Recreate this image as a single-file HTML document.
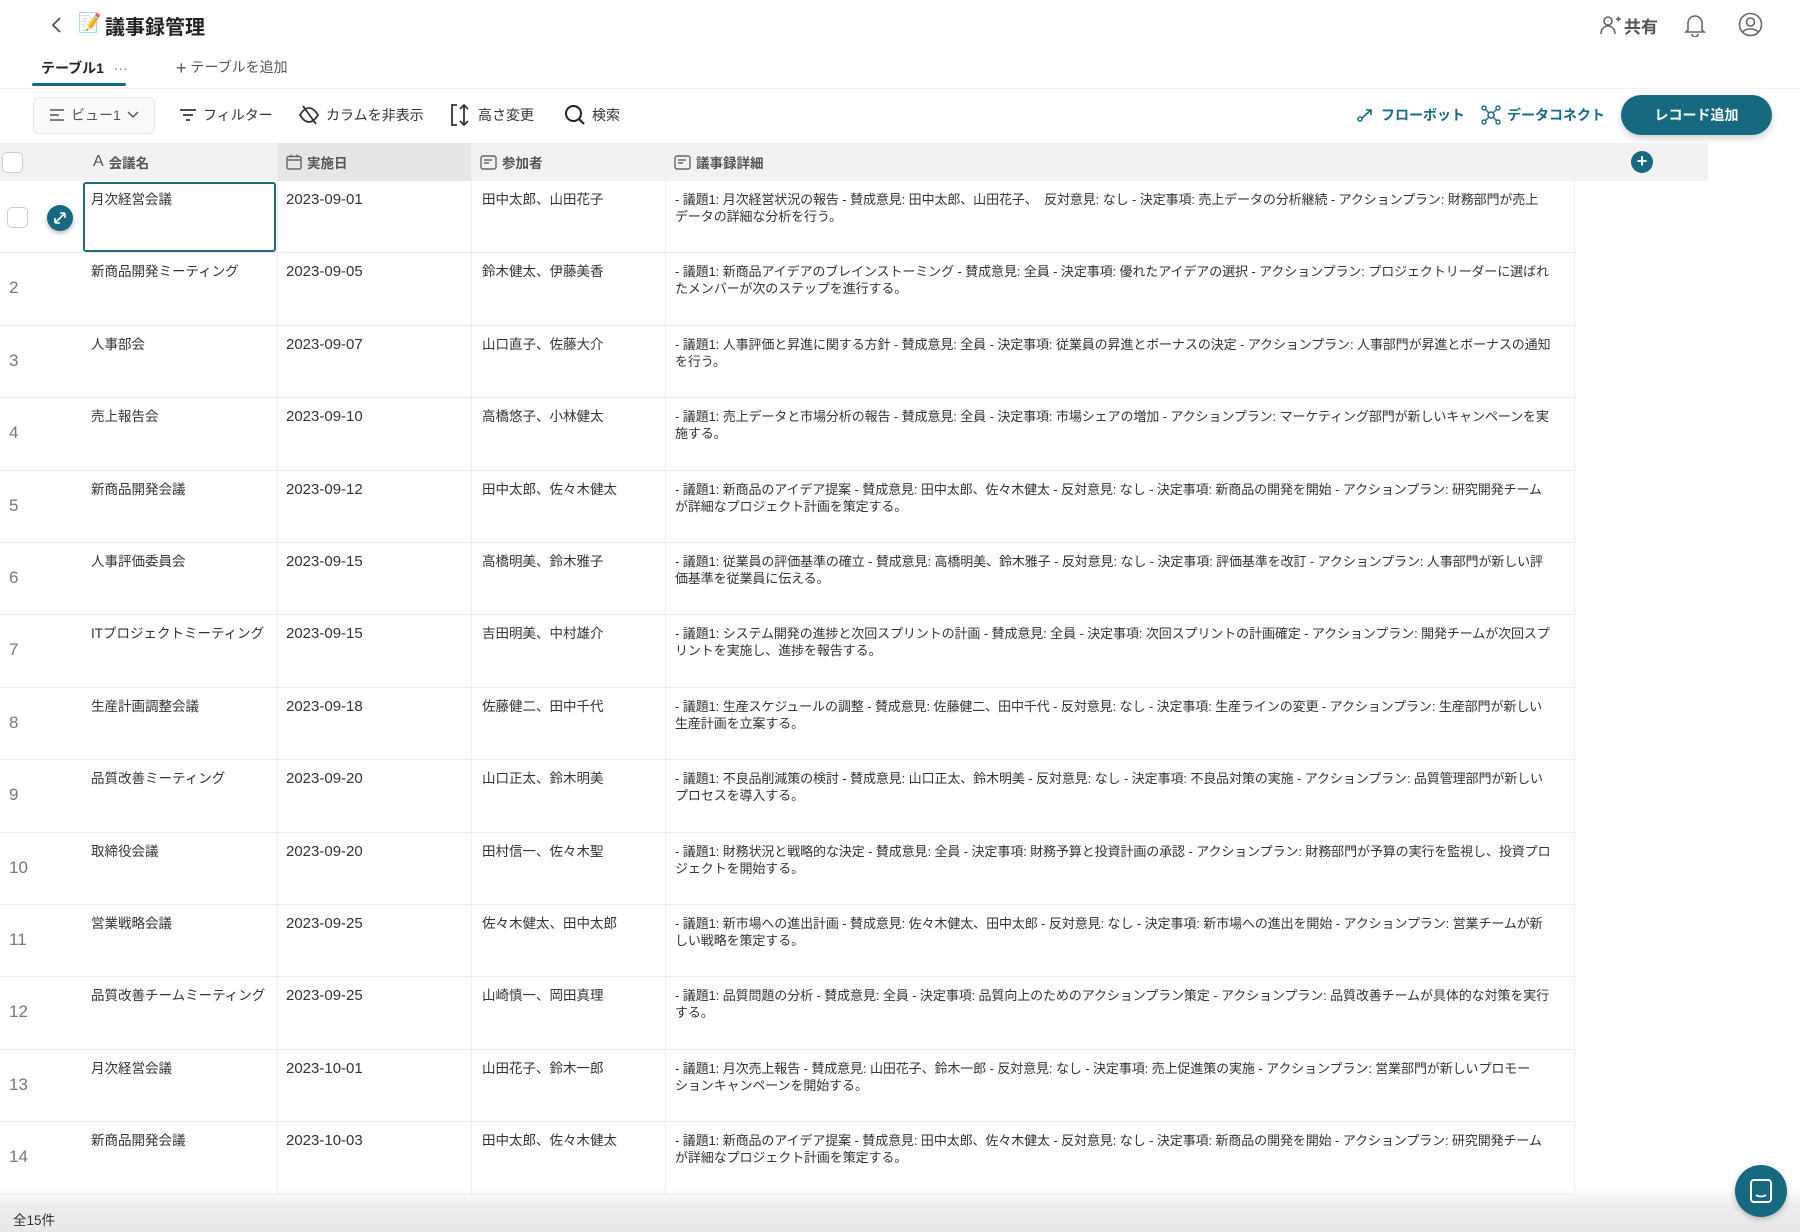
<!DOCTYPE html>
<html><head><meta charset="utf-8"><style>
*{box-sizing:border-box;margin:0;padding:0}
body{width:1800px;height:1232px;overflow:hidden;background:#fff;font-family:"Liberation Sans","Noto Sans CJK JP",sans-serif;color:#222;position:relative}
.abs{position:absolute}
.tb{position:absolute;top:104px;font-size:14px;color:#333;display:flex;align-items:center;gap:6px;height:22px}
.hdr{position:absolute;top:143px;height:38px;background:#f2f2f2;left:0;width:1708px}
.hc{position:absolute;top:0;height:38px;display:flex;align-items:center;font-size:13.5px;font-weight:bold;color:#555;gap:5px}
.row{position:absolute;left:0;width:1574px;height:72.4px;border-bottom:1px solid #ececec}
.row div{position:absolute;top:10px;font-size:13.5px;color:#333;line-height:17px;white-space:nowrap}
.row div.d{font-size:13px;letter-spacing:-0.1px}
.vl{position:absolute;top:143px;bottom:38px;width:1px;background:#efefef}
.num{left:9px!important;top:26px!important;font-size:17px!important;color:#777!important}
</style></head><body>
<svg class="abs" style="left:50px;top:15px" width="14" height="20" viewBox="0 0 14 20"><path d="M10 3 L3 10 L10 17" fill="none" stroke="#555" stroke-width="1.8"/></svg>
<div class="abs" style="left:78px;top:13px;width:22px;height:22px;font-size:19px;line-height:22px">📝</div>
<div class="abs" style="left:105px;top:11px;font-size:20px;font-weight:bold;color:#222">議事録管理</div>
<svg class="abs" style="left:1600px;top:14px" width="22" height="22" viewBox="0 0 22 22"><circle cx="8" cy="7" r="4" fill="none" stroke="#666" stroke-width="1.6"/><path d="M1 20c0-5 3-8 7-8s7 3 7 8" fill="none" stroke="#666" stroke-width="1.6"/><path d="M16 5h5M18.5 2.5v5" stroke="#666" stroke-width="1.6"/></svg>
<div class="abs" style="left:1624px;top:13px;font-size:17px;font-weight:bold;color:#555">共有</div>
<svg class="abs" style="left:1684px;top:13px" width="22" height="24" viewBox="0 0 22 24"><path d="M4 17V10a7 7 0 0 1 14 0v7l2 2H2z" fill="none" stroke="#666" stroke-width="1.6"/><path d="M8 21a3 3 0 0 0 6 0" fill="none" stroke="#666" stroke-width="1.6"/></svg>
<svg class="abs" style="left:1738px;top:12px" width="25" height="25" viewBox="0 0 25 25"><circle cx="12.5" cy="12.5" r="11" fill="none" stroke="#666" stroke-width="1.6"/><circle cx="12.5" cy="10" r="4" fill="none" stroke="#666" stroke-width="1.6"/><path d="M5 20c2-4 13-4 15 0" fill="none" stroke="#666" stroke-width="1.6"/></svg>
<div class="abs" style="left:41px;top:58px;font-size:14px;font-weight:bold;color:#222">テーブル1 <span style="font-weight:normal;color:#777;margin-left:6px">···</span></div>
<div class="abs" style="left:32px;top:83px;width:94px;height:3px;background:#1a6a80;border-radius:2px"></div>
<div class="abs" style="left:176px;top:57px;font-size:14px;color:#555"><span style="font-size:18px;vertical-align:-2px">+</span> テーブルを追加</div>
<div class="abs" style="left:0;top:88px;width:1800px;height:1px;background:#f2f2f2"></div>
<div class="abs" style="left:33px;top:97px;width:122px;height:37px;border:1px solid #e8e8e8;border-radius:6px;background:#fafafa"></div>
<div class="tb" style="left:49px;color:#555"><svg width="16" height="14"><path d="M1 2h14M1 7h9M1 12h14" stroke="#555" stroke-width="1.6"/></svg>ビュー1 <svg width="12" height="8"><path d="M1 1l5 5 5-5" fill="none" stroke="#555" stroke-width="1.5"/></svg></div>
<div class="tb" style="left:179px"><svg width="18" height="14"><path d="M1 2h16M4 7h10M7 12h4" stroke="#333" stroke-width="1.8"/></svg>フィルター</div>
<div class="tb" style="left:298px"><svg width="22" height="20" viewBox="0 0 22 20"><path d="M2 10c3-5 6-7 9-7s6 2 9 7c-3 5-6 7-9 7s-6-2-9-7z" fill="none" stroke="#333" stroke-width="1.8"/><path d="M5 1l13 18" stroke="#333" stroke-width="1.8"/></svg>カラムを非表示</div>
<div class="tb" style="left:450px"><svg width="22" height="24" viewBox="0 0 22 24"><path d="M7 2H2v20h5" fill="none" stroke="#333" stroke-width="1.8"/><path d="M14 2v20M10 6l4-4 4 4M10 18l4 4 4-4" fill="none" stroke="#333" stroke-width="1.8"/></svg>高さ変更</div>
<div class="tb" style="left:564px"><svg width="22" height="22"><circle cx="9.5" cy="9.5" r="7.5" fill="none" stroke="#222" stroke-width="2"/><path d="M15 15l5 5" stroke="#222" stroke-width="2.2"/></svg>検索</div>
<div class="tb" style="left:1357px;color:#1a6a80;font-weight:bold"><svg width="18" height="14"><circle cx="3" cy="11" r="2" fill="none" stroke="#1a6a80" stroke-width="1.5"/><path d="M5 10l9-8M9 2h5v5" fill="none" stroke="#1a6a80" stroke-width="1.6"/></svg>フローボット</div>
<div class="tb" style="left:1481px;color:#1a6a80;font-weight:bold"><svg width="20" height="20"><circle cx="10" cy="10" r="3" fill="none" stroke="#1a6a80" stroke-width="1.5"/><circle cx="3" cy="3" r="2" fill="none" stroke="#1a6a80" stroke-width="1.4"/><circle cx="17" cy="3" r="2" fill="none" stroke="#1a6a80" stroke-width="1.4"/><circle cx="3" cy="17" r="2" fill="none" stroke="#1a6a80" stroke-width="1.4"/><circle cx="17" cy="17" r="2" fill="none" stroke="#1a6a80" stroke-width="1.4"/><path d="M4.5 4.5l3 3M15.5 4.5l-3 3M4.5 15.5l3-3M15.5 15.5l-3-3" stroke="#1a6a80" stroke-width="1.4"/></svg>データコネクト</div>
<div class="abs" style="left:1621px;top:95px;width:151px;height:40px;border-radius:20px;background:#16697f;color:#fff;font-size:14px;font-weight:bold;text-align:center;line-height:40px;box-shadow:0 3px 8px rgba(0,0,0,.2)">レコード追加</div>
<div class="hdr">
 <div class="abs" style="left:2px;top:9px;width:21px;height:21px;border:1px solid #ccc;border-radius:5px;background:#fff"></div>
 <div class="hc" style="left:93px"><span style="font-size:16px;font-weight:normal">A</span>会議名</div>
 <div class="abs" style="left:277px;top:0;width:194px;height:38px;background:#e6e6e6"></div>
 <div class="hc" style="left:286px"><svg width="16" height="16"><rect x="1" y="2.5" width="14" height="12.5" rx="1.5" fill="none" stroke="#666" stroke-width="1.4"/><path d="M1 6h14M5 0.5v3M11 0.5v3" stroke="#666" stroke-width="1.4"/></svg>実施日</div>
 <div class="hc" style="left:480px"><svg width="17" height="15"><rect x="1" y="1" width="15" height="13" rx="2" fill="none" stroke="#666" stroke-width="1.4"/><path d="M4 5h8M4 8h5" stroke="#666" stroke-width="1.4"/></svg>参加者</div>
 <div class="hc" style="left:674px"><svg width="17" height="15"><rect x="1" y="1" width="15" height="13" rx="2" fill="none" stroke="#666" stroke-width="1.4"/><path d="M4 5h8M4 8h5" stroke="#666" stroke-width="1.4"/></svg>議事録詳細</div>
 <div class="abs" style="left:1574px;top:0;width:1px;height:38px;background:#e6e6e6"></div>
 <div class="abs" style="left:1631px;top:8px;width:22px;height:22px;border-radius:50%;background:#16697f;color:#fff;text-align:center;line-height:21px;font-size:18px;font-weight:bold">+</div>
</div>
<div class="vl" style="left:277px"></div><div class="vl" style="left:471px"></div><div class="vl" style="left:665px"></div><div class="vl" style="left:1574px"></div>
<div class="row" style="top:181px">
 <div style="left:7px;top:26px;width:21px;height:21px;border:1px solid #ccc;border-radius:5px"></div>
 <div style="left:47px;top:24px;width:26px;height:26px;border-radius:50%;background:#16697f;box-shadow:0 2px 5px rgba(0,0,0,.3)"><svg width="26" height="26"><path d="M8 18l10-10M8 18v-5M8 18h5M18 8h-5M18 8v5" fill="none" stroke="#fff" stroke-width="1.6"/></svg></div>
 <div style="left:83px;top:1px;width:193px;height:70px;border:2px solid #1a6a80;border-radius:3px"></div>
 <div style="left:91px">月次経営会議</div><div style="left:286px;font-size:15px">2023-09-01</div><div style="left:482px">田中太郎、山田花子</div>
 <div class="d" style="left:675px">- 議題1: 月次経営状況の報告 - 賛成意見: 田中太郎、山田花子、　反対意見: なし - 決定事項: 売上データの分析継続 - アクションプラン: 財務部門が売上<br>データの詳細な分析を行う。</div>
</div>
<div class="row" style="top:253.4px"><div class="num">2</div><div style="left:91px">新商品開発ミーティング</div><div style="left:286px;font-size:15px">2023-09-05</div><div style="left:482px">鈴木健太、伊藤美香</div><div class="d" style="left:675px">- 議題1: 新商品アイデアのブレインストーミング - 賛成意見: 全員 - 決定事項: 優れたアイデアの選択 - アクションプラン: プロジェクトリーダーに選ばれ<br>たメンバーが次のステップを進行する。</div></div>
<div class="row" style="top:325.8px"><div class="num">3</div><div style="left:91px">人事部会</div><div style="left:286px;font-size:15px">2023-09-07</div><div style="left:482px">山口直子、佐藤大介</div><div class="d" style="left:675px">- 議題1: 人事評価と昇進に関する方針 - 賛成意見: 全員 - 決定事項: 従業員の昇進とボーナスの決定 - アクションプラン: 人事部門が昇進とボーナスの通知<br>を行う。</div></div>
<div class="row" style="top:398.2px"><div class="num">4</div><div style="left:91px">売上報告会</div><div style="left:286px;font-size:15px">2023-09-10</div><div style="left:482px">高橋悠子、小林健太</div><div class="d" style="left:675px">- 議題1: 売上データと市場分析の報告 - 賛成意見: 全員 - 決定事項: 市場シェアの増加 - アクションプラン: マーケティング部門が新しいキャンペーンを実<br>施する。</div></div>
<div class="row" style="top:470.6px"><div class="num">5</div><div style="left:91px">新商品開発会議</div><div style="left:286px;font-size:15px">2023-09-12</div><div style="left:482px">田中太郎、佐々木健太</div><div class="d" style="left:675px">- 議題1: 新商品のアイデア提案 - 賛成意見: 田中太郎、佐々木健太 - 反対意見: なし - 決定事項: 新商品の開発を開始 - アクションプラン: 研究開発チーム<br>が詳細なプロジェクト計画を策定する。</div></div>
<div class="row" style="top:543px"><div class="num">6</div><div style="left:91px">人事評価委員会</div><div style="left:286px;font-size:15px">2023-09-15</div><div style="left:482px">高橋明美、鈴木雅子</div><div class="d" style="left:675px">- 議題1: 従業員の評価基準の確立 - 賛成意見: 高橋明美、鈴木雅子 - 反対意見: なし - 決定事項: 評価基準を改訂 - アクションプラン: 人事部門が新しい評<br>価基準を従業員に伝える。</div></div>
<div class="row" style="top:615.4px"><div class="num">7</div><div style="left:91px">ITプロジェクトミーティング</div><div style="left:286px;font-size:15px">2023-09-15</div><div style="left:482px">吉田明美、中村雄介</div><div class="d" style="left:675px">- 議題1: システム開発の進捗と次回スプリントの計画 - 賛成意見: 全員 - 決定事項: 次回スプリントの計画確定 - アクションプラン: 開発チームが次回スプ<br>リントを実施し、進捗を報告する。</div></div>
<div class="row" style="top:687.8px"><div class="num">8</div><div style="left:91px">生産計画調整会議</div><div style="left:286px;font-size:15px">2023-09-18</div><div style="left:482px">佐藤健二、田中千代</div><div class="d" style="left:675px">- 議題1: 生産スケジュールの調整 - 賛成意見: 佐藤健二、田中千代 - 反対意見: なし - 決定事項: 生産ラインの変更 - アクションプラン: 生産部門が新しい<br>生産計画を立案する。</div></div>
<div class="row" style="top:760.2px"><div class="num">9</div><div style="left:91px">品質改善ミーティング</div><div style="left:286px;font-size:15px">2023-09-20</div><div style="left:482px">山口正太、鈴木明美</div><div class="d" style="left:675px">- 議題1: 不良品削減策の検討 - 賛成意見: 山口正太、鈴木明美 - 反対意見: なし - 決定事項: 不良品対策の実施 - アクションプラン: 品質管理部門が新しい<br>プロセスを導入する。</div></div>
<div class="row" style="top:832.6px"><div class="num">10</div><div style="left:91px">取締役会議</div><div style="left:286px;font-size:15px">2023-09-20</div><div style="left:482px">田村信一、佐々木聖</div><div class="d" style="left:675px">- 議題1: 財務状況と戦略的な決定 - 賛成意見: 全員 - 決定事項: 財務予算と投資計画の承認 - アクションプラン: 財務部門が予算の実行を監視し、投資プロ<br>ジェクトを開始する。</div></div>
<div class="row" style="top:905px"><div class="num">11</div><div style="left:91px">営業戦略会議</div><div style="left:286px;font-size:15px">2023-09-25</div><div style="left:482px">佐々木健太、田中太郎</div><div class="d" style="left:675px">- 議題1: 新市場への進出計画 - 賛成意見: 佐々木健太、田中太郎 - 反対意見: なし - 決定事項: 新市場への進出を開始 - アクションプラン: 営業チームが新<br>しい戦略を策定する。</div></div>
<div class="row" style="top:977.4px"><div class="num">12</div><div style="left:91px">品質改善チームミーティング</div><div style="left:286px;font-size:15px">2023-09-25</div><div style="left:482px">山崎慎一、岡田真理</div><div class="d" style="left:675px">- 議題1: 品質問題の分析 - 賛成意見: 全員 - 決定事項: 品質向上のためのアクションプラン策定 - アクションプラン: 品質改善チームが具体的な対策を実行<br>する。</div></div>
<div class="row" style="top:1049.8px"><div class="num">13</div><div style="left:91px">月次経営会議</div><div style="left:286px;font-size:15px">2023-10-01</div><div style="left:482px">山田花子、鈴木一郎</div><div class="d" style="left:675px">- 議題1: 月次売上報告 - 賛成意見: 山田花子、鈴木一郎 - 反対意見: なし - 決定事項: 売上促進策の実施 - アクションプラン: 営業部門が新しいプロモー<br>ションキャンペーンを開始する。</div></div>
<div class="row" style="top:1122.2px"><div class="num">14</div><div style="left:91px">新商品開発会議</div><div style="left:286px;font-size:15px">2023-10-03</div><div style="left:482px">田中太郎、佐々木健太</div><div class="d" style="left:675px">- 議題1: 新商品のアイデア提案 - 賛成意見: 田中太郎、佐々木健太 - 反対意見: なし - 決定事項: 新商品の開発を開始 - アクションプラン: 研究開発チーム<br>が詳細なプロジェクト計画を策定する。</div></div>
<div class="abs" style="left:0;top:1188px;width:1800px;height:44px;background:linear-gradient(#ffffff00,#ececec 45%,#e8e8e8)"></div>
<div class="abs" style="left:13px;top:1209px;font-size:13.5px;color:#333">全15件</div>
<div class="abs" style="left:1735px;top:1165px;width:52px;height:52px;border-radius:50%;background:#16697f;box-shadow:0 2px 6px rgba(0,0,0,.25)"><svg width="52" height="52"><rect x="16" y="15" width="20" height="22" rx="3" fill="none" stroke="#fff" stroke-width="2"/><path d="M21 30c3 2 7 2 10 0" fill="none" stroke="#fff" stroke-width="1.8"/></svg></div>
</body></html>
